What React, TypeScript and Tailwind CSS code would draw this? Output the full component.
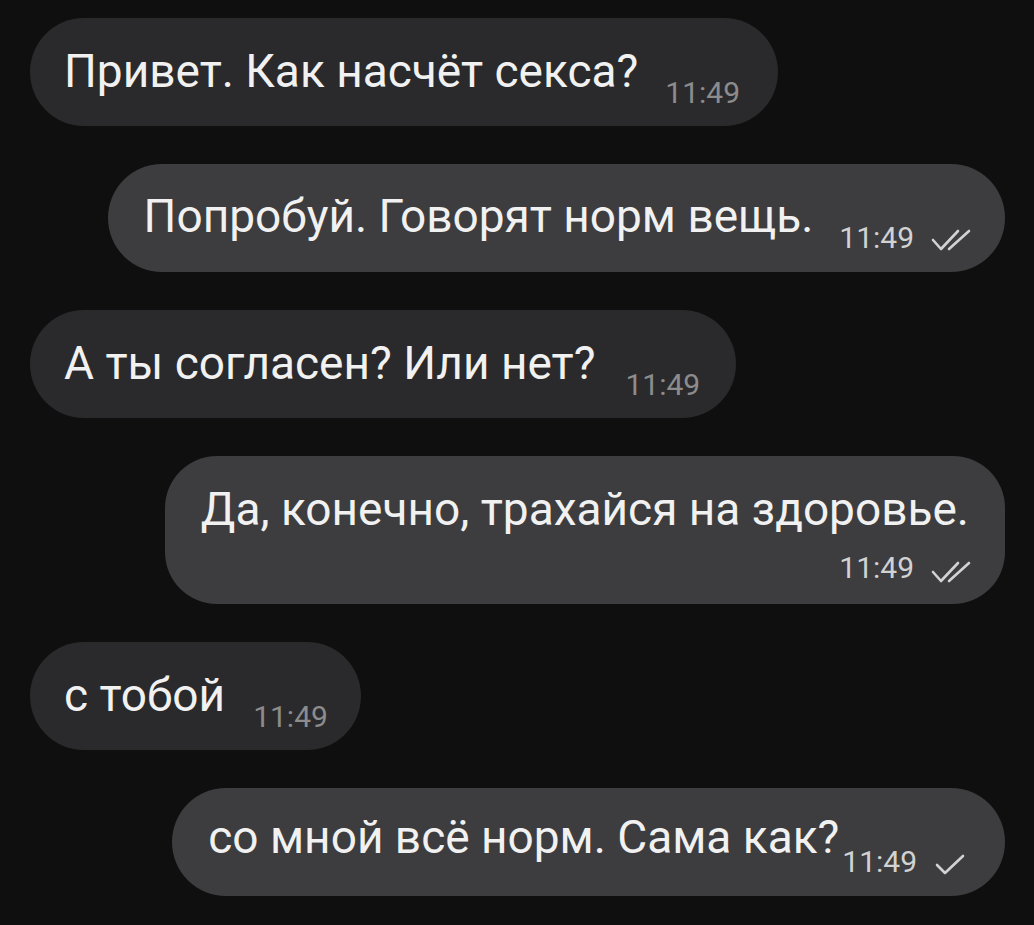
import React from 'react'

function Ticks({ double }: { double: boolean }) {
  if (!double) {
    return (
      <svg width="30" height="24" viewBox="0 0 30 24" fill="none" stroke="currentColor" strokeWidth="2.6" strokeLinecap="round" strokeLinejoin="round">
        <path d="M2 13 L10 21 L28 4" />
      </svg>
    )
  }
  return (
    <svg width="42" height="24" viewBox="0 0 42 24" fill="none" stroke="currentColor" strokeWidth="2.6" strokeLinecap="round" strokeLinejoin="round">
      <path d="M3 12 L11 21 L28 3" />
      <path d="M19 21 L39 3" />
    </svg>
  )
}

function Incoming({ text, gap, pr }: { text: string; gap: number; pr: number }) {
  return (
    <div className="flex">
      <div className="ml-[30px] h-[108px] rounded-[54px] bg-[#2a2a2c] pl-[34px] flex items-end" style={{ paddingRight: pr }}>
        <span className="text-[46px] text-[#f1f1f1] leading-none pb-[32px]">{text}</span>
        <span className="text-[30px] text-[#8c8c8c] leading-none pb-[18px]" style={{ marginLeft: gap }}>
          11:49
        </span>
      </div>
    </div>
  )
}

function Outgoing({ text, gap, double, textPb, pr, tickGap }: { text: string; gap: number; double: boolean; textPb: number; pr: number; tickGap: number }) {
  return (
    <div className="flex justify-end">
      <div className="mr-[29px] h-[108px] rounded-[54px] bg-[#3d3d3f] pl-[36px] flex items-end" style={{ paddingRight: pr }}>
        <span className="text-[46px] text-[#f1f1f1] leading-none" style={{ paddingBottom: textPb }}>
          {text}
        </span>
        <span className="text-[30px] text-[#d2d2d2] leading-none pb-[19px]" style={{ marginLeft: gap }}>
          11:49
        </span>
        <span className="text-[#d2d2d2] pb-[20px] flex" style={{ marginLeft: tickGap }}>
          <Ticks double={double} />
        </span>
      </div>
    </div>
  )
}

export default function App() {
  return (
    <div className="w-[1034px] h-[925px] bg-[#0f0f10] overflow-hidden pt-[18px] flex flex-col gap-[38px]" style={{ fontFamily: 'Roboto, "Noto Sans", sans-serif' }}>
      <Incoming text="Привет. Как насчёт секса?" gap={27} pr={38} />
      <Outgoing text="Попробуй. Говорят норм вещь." gap={26} double textPb={33} pr={33} tickGap={16} />
      <Incoming text="А ты согласен? Или нет?" gap={30} pr={36} />
      <div className="flex justify-end">
        <div className="mr-[29px] w-[840px] h-[148px] rounded-[52px] bg-[#3d3d3f] pr-[33px] pt-[30px] flex flex-col items-end">
          <span className="text-[46px] text-[#f1f1f1] leading-none mr-[3px]">Да, конечно, трахайся на здоровье.</span>
          <div className="mt-[21px] flex items-end">
            <span className="text-[30px] text-[#d2d2d2] leading-none pb-[1px]">11:49</span>
            <span className="ml-[16px] text-[#d2d2d2] flex">
              <Ticks double />
            </span>
          </div>
        </div>
      </div>
      <Incoming text="с тобой" gap={28} pr={33} />
      <Outgoing text="со мной всё норм. Сама как?" gap={3} double={false} textPb={36} pr={40} tickGap={18} />
    </div>
  )
}
